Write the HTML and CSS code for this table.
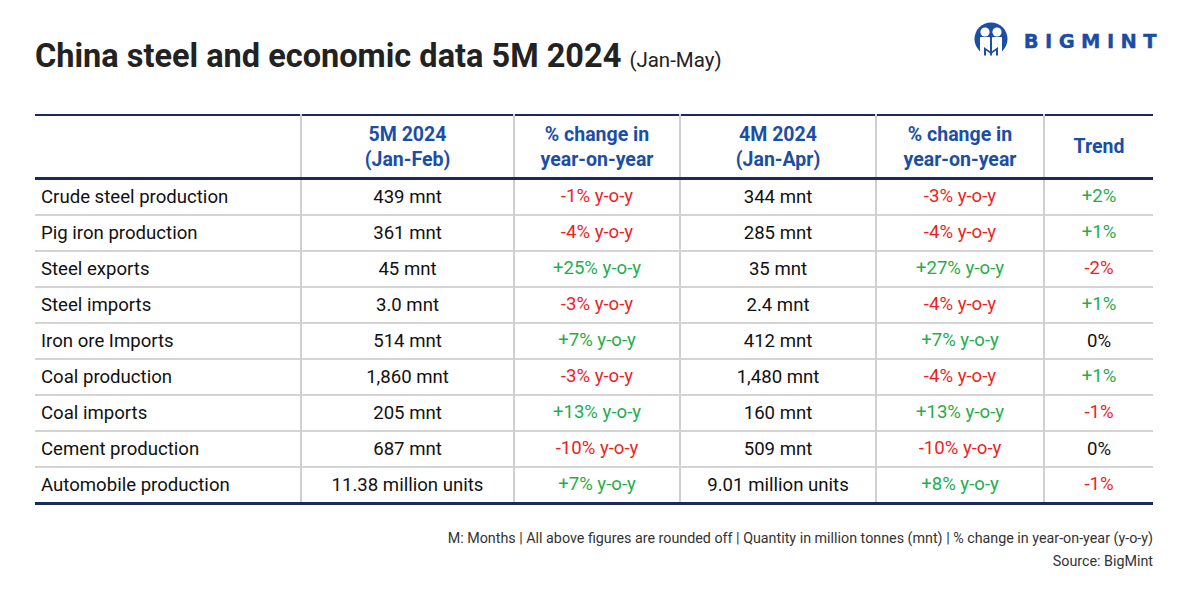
FILE: index.html
```html
<!DOCTYPE html>
<html>
<head>
<meta charset="utf-8">
<link rel="stylesheet" href="styles.css">
</head>
<body>
<div class="page">
  <header class="top">
    <h1 class="title">China steel and economic data 5M 2024 <span class="sub">(Jan-May)</span></h1>
    <div class="logo">
      <svg class="logo-icon" viewBox="-17 -17 34 34" width="34" height="34">
        <circle cx="0" cy="0" r="16.5" fill="#1c4fa3"/>
        <circle cx="-6" cy="-7" r="4.6" fill="#fff"/>
        <circle cx="6" cy="-7" r="4.6" fill="#fff"/>
        <path d="M-11 -1 Q-11 -2 -10 -2 L-2 -2 Q-1 -2 -1 -1 L-1 18 L-11 18 Z" fill="#fff"/>
        <path d="M1 -1 Q1 -2 2 -2 L10 -2 Q11 -2 11 -1 L11 18 L1 18 Z" fill="#fff"/>
        <path d="M-7 16.5 L-7 8 L0 13 L7 8 L7 16.5 L5 16.5 L5 11.5 L0 15 L-5 11.5 L-5 16.5 Z" fill="#1c4fa3"/>
      </svg>
      <span class="logo-text">BIGMINT</span>
    </div>
  </header>

  <table class="data">
    <colgroup>
      <col class="c1"><col class="c2"><col class="c3"><col class="c4"><col class="c5"><col class="c6">
    </colgroup>
    <thead>
      <tr>
        <th></th>
        <th>5M 2024<br>(Jan-Feb)</th>
        <th>% change in<br>year-on-year</th>
        <th>4M 2024<br>(Jan-Apr)</th>
        <th>% change in<br>year-on-year</th>
        <th>Trend</th>
      </tr>
    </thead>
    <tbody>
      <tr><td class="label">Crude steel production</td><td>439 mnt</td><td class="neg">-1% y-o-y</td><td>344 mnt</td><td class="neg">-3% y-o-y</td><td class="pos">+2%</td></tr>
      <tr><td class="label">Pig iron production</td><td>361 mnt</td><td class="neg">-4% y-o-y</td><td>285 mnt</td><td class="neg">-4% y-o-y</td><td class="pos">+1%</td></tr>
      <tr><td class="label">Steel exports</td><td>45 mnt</td><td class="pos">+25% y-o-y</td><td>35 mnt</td><td class="pos">+27% y-o-y</td><td class="neg">-2%</td></tr>
      <tr><td class="label">Steel imports</td><td>3.0 mnt</td><td class="neg">-3% y-o-y</td><td>2.4 mnt</td><td class="neg">-4% y-o-y</td><td class="pos">+1%</td></tr>
      <tr><td class="label">Iron ore Imports</td><td>514 mnt</td><td class="pos">+7% y-o-y</td><td>412 mnt</td><td class="pos">+7% y-o-y</td><td>0%</td></tr>
      <tr><td class="label">Coal production</td><td>1,860 mnt</td><td class="neg">-3% y-o-y</td><td>1,480 mnt</td><td class="neg">-4% y-o-y</td><td class="pos">+1%</td></tr>
      <tr><td class="label">Coal imports</td><td>205 mnt</td><td class="pos">+13% y-o-y</td><td>160 mnt</td><td class="pos">+13% y-o-y</td><td class="neg">-1%</td></tr>
      <tr><td class="label">Cement production</td><td>687 mnt</td><td class="neg">-10% y-o-y</td><td>509 mnt</td><td class="neg">-10% y-o-y</td><td>0%</td></tr>
      <tr><td class="label">Automobile production</td><td>11.38 million units</td><td class="pos">+7% y-o-y</td><td>9.01 million units</td><td class="pos">+8% y-o-y</td><td class="neg">-1%</td></tr>
    </tbody>
  </table>

  <footer class="notes">
    <p>M: Months | All above figures are rounded off | Quantity in million tonnes (mnt) | % change in year-on-year (y-o-y)</p>
    <p>Source: BigMint</p>
  </footer>
</div>
</body>
</html>
```

FILE: styles.css
```css
html, body {
  margin: 0;
  padding: 0;
  background: #ffffff;
}

.page {
  width: 1200px;
  height: 600px;
  box-sizing: border-box;
  padding: 0 47px 0 35px;
  font-family: Roboto, "Liberation Sans", sans-serif;
  color: #111111;
}

.top {
  display: flex;
  justify-content: space-between;
  align-items: flex-start;
  height: 114px;
}

.title {
  margin: 37px 0 0 0;
  font-size: 32.5px;
  font-weight: 700;
  letter-spacing: 0;
  color: #222222;
  line-height: 38px;
}

.sub {
  font-size: 20.5px;
  font-weight: 400;
  color: #222222;
}

.logo {
  display: flex;
  align-items: center;
  gap: 16px;
  margin-top: 22px;
  margin-right: -10px;
}

.logo-icon {
  display: block;
}

.logo-text {
  font-family: "DejaVu Sans", "Liberation Sans", sans-serif;
  font-weight: 700;
  font-size: 19.5px;
  letter-spacing: 6.4px;
  color: #1a4da3;
  padding-top: 5px;
  -webkit-text-stroke: 0.4px #1a4da3;
}

.data {
  width: 1118px;
  border-collapse: collapse;
  table-layout: fixed;
  border-top: 2px solid #1b2a5e;
  border-bottom: 3px solid #1b2a5e;
}

.c1 { width: 266px; }
.c2 { width: 213px; }
.c3 { width: 166px; }
.c4 { width: 196px; }
.c5 { width: 168px; }
.c6 { width: 109px; }

.data th {
  height: 61px;
  padding: 0;
  font-size: 19.5px;
  line-height: 25px;
  font-weight: 700;
  color: #1b4ea6;
  text-align: center;
  border-left: 2px solid #cfcfcf;
  border-bottom: 3px solid #1b2a5e;
}

.data td {
  height: 34px;
  padding: 0;
  font-size: 18.6px;
  text-align: center;
  border-left: 2px solid #cfcfcf;
  border-top: 2px solid #d4d4d4;
  color: #111111;
}

.data th:first-child,
.data td:first-child {
  border-left: none;
}

.data tbody tr:first-child td {
  border-top: none;
}

.data td.label {
  text-align: left;
  padding-left: 6px;
}

.data td.neg,
.data td.pos {
  height: 31px;
  padding-bottom: 3px;
}

.data td.neg {
  color: #ee1f1f;
}

.data td.pos {
  color: #1fae4c;
}

.notes {
  margin-top: 22px;
  text-align: right;
  font-size: 14.3px;
  color: #333333;
}

.notes p {
  margin: 0;
  line-height: 23px;
}
```
